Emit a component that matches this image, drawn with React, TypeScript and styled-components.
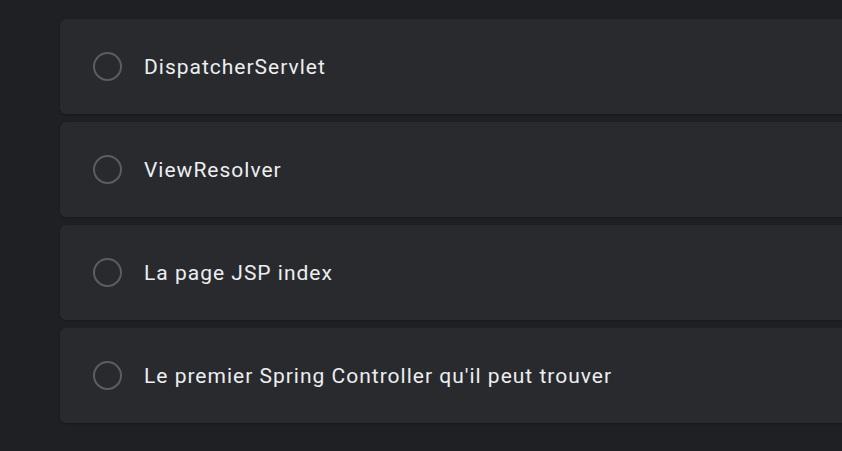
import React from "react";
import styled, { createGlobalStyle } from "styled-components";

const Global = createGlobalStyle`
  html, body { margin: 0; padding: 0; background: #202124; }
  body { font-family: Roboto, "Noto Sans", Arial, sans-serif; overflow: hidden; }
`;

const Page = styled.div`
  width: 842px;
  height: 451px;
  overflow: hidden;
  background: #1f2023;
  padding: 19px 0 0 60px;
  box-sizing: border-box;
`;

const List = styled.div`
  display: flex;
  flex-direction: column;
  gap: 8px;
  width: 820px;
`;

const Card = styled.label`
  display: flex;
  align-items: center;
  height: 95px;
  padding-left: 33px;
  background: #292a2d;
  border-radius: 6px;
  box-shadow: 0 1px 2px rgba(0, 0, 0, 0.25);
  cursor: pointer;
`;

const Radio = styled.span`
  width: 29px;
  height: 29px;
  box-sizing: border-box;
  border-radius: 50%;
  border: 2px solid #5c5d61;
  flex-shrink: 0;
`;

const Label = styled.span`
  margin-left: 22px;
  color: #eceef1;
  font-size: 21px;
  letter-spacing: 1px;
`;

const options = [
  "DispatcherServlet",
  "ViewResolver",
  "La page JSP index",
  "Le premier Spring Controller qu'il peut trouver",
];

export default function App() {
  return (
    <>
      <Global />
      <Page>
        <List>
          {options.map((o) => (
            <Card key={o}>
              <Radio />
              <Label>{o}</Label>
            </Card>
          ))}
        </List>
      </Page>
    </>
  );
}
